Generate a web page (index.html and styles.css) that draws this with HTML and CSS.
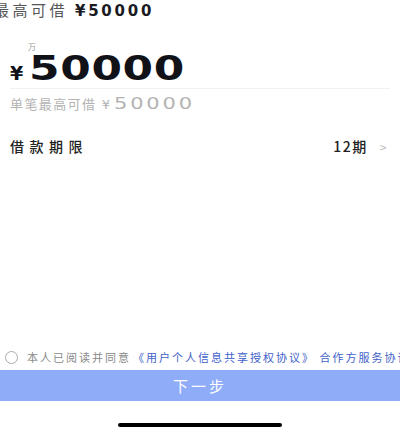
FILE: index.html
```html
<!DOCTYPE html>
<html lang="zh">
<head>
<meta charset="utf-8">
<link rel="stylesheet" href="styles.css">
</head>
<body>
<div class="page">
  <div class="head"><span class="head-label">最高可借</span> <span class="head-num">¥50000</span></div>
  <div class="amount">
    <div class="unit">万</div>
    <div class="amount-row"><span class="yen">¥</span><span class="big">50000</span></div>
  </div>
  <div class="divider"></div>
  <div class="limit">单笔最高可借 <span class="limit-yen">¥</span><span class="limit-num">50000</span></div>
  <div class="term">
    <span class="term-label">借款期限</span>
    <span class="term-value">12期<span class="arrow">&gt;</span></span>
  </div>
  <div class="spacer"></div>
  <div class="agree">
    <span class="radio"></span>
    <span class="agree-text">本人已阅读并同意</span>
    <span class="agree-link">《用户个人信息共享授权协议》 合作方服务协议</span>
  </div>
  <div class="btn">下一步</div>
  <div class="home"><span class="home-bar"></span></div>
</div>
</body>
</html>
```

FILE: styles.css
```css
html, body {
  margin: 0;
  padding: 0;
  background: #ffffff;
}
body {
  font-family: "Noto Sans CJK SC", "DejaVu Sans", sans-serif;
  color: #222;
  overflow: hidden;
}
.page {
  width: 400px;
  height: 432px;
  display: flex;
  flex-direction: column;
  overflow: hidden;
}
.head {
  margin-left: -6px;
  height: 20px;
  line-height: 20px;
  font-size: 15px;
  letter-spacing: 3.5px;
  white-space: nowrap;
}
.head-label {
  color: #555;
}
.head-num {
  font-family: "DejaVu Sans", sans-serif;
  font-weight: bold;
  color: #1a1a22;
  font-size: 15px;
  letter-spacing: 2.8px;
}
.amount {
  padding: 22px 10px 0 10px;
}
.unit {
  margin-left: 18px;
  font-size: 8px;
  line-height: 10px;
  color: #999;
}
.amount-row {
  display: flex;
  align-items: baseline;
  height: 34px;
}
.yen {
  font-family: "DejaVu Sans", sans-serif;
  font-weight: bold;
  font-size: 19px;
  color: #111118;
  margin-right: 6px;
}
.big {
  display: inline-block;
  font-family: "DejaVu Sans", sans-serif;
  font-weight: bold;
  font-size: 33px;
  line-height: 34px;
  letter-spacing: 0.5px;
  color: #111118;
  transform: scaleX(1.33);
  transform-origin: left center;
}
.divider {
  margin: 2px 10px 0 10px;
  height: 1px;
  background: #f1f1f1;
}
.limit {
  margin-top: 6px;
  padding: 0 10px;
  font-size: 13px;
  line-height: 18px;
  letter-spacing: 1.4px;
  color: #b3b3b3;
  white-space: nowrap;
}
.limit-yen {
  font-family: "DejaVu Sans", sans-serif;
  font-size: 13px;
  margin-left: 1px;
  margin-right: 3px;
}
.limit-num {
  display: inline-block;
  font-family: "DejaVu Sans", sans-serif;
  font-size: 15px;
  letter-spacing: 2px;
  transform: scaleX(1.4);
  transform-origin: left center;
}
.term {
  margin-top: 22px;
  padding: 0 12px 0 10px;
  display: flex;
  justify-content: space-between;
  align-items: center;
  height: 20px;
  font-size: 14px;
  line-height: 20px;
}
.term-label {
  letter-spacing: 5.5px;
  color: #222;
  font-weight: 500;
}
.term-value {
  font-weight: 500;
  color: #222;
  letter-spacing: 1.5px;
}
.arrow {
  margin-left: 12px;
  color: #bbb;
  font-size: 12px;
  font-weight: normal;
}
.spacer {
  flex: 1;
}
.agree {
  display: flex;
  align-items: center;
  height: 18px;
  padding-left: 5px;
  white-space: nowrap;
  font-size: 11px;
  letter-spacing: 2px;
}
.radio {
  flex: none;
  width: 11px;
  height: 11px;
  border: 1px solid #aaa;
  border-radius: 50%;
  margin-right: 9px;
}
.agree-text {
  color: #8a8a8a;
}
.agree-link {
  color: #3f62c9;
  margin-left: 2px;
}
.btn {
  margin-top: 4px;
  height: 31px;
  line-height: 31px;
  background: #8eacf8;
  color: #fff;
  text-align: center;
  font-size: 15px;
  letter-spacing: 3px;
}
.home {
  height: 31px;
  display: flex;
  justify-content: center;
  align-items: flex-end;
  padding-bottom: 5px;
  box-sizing: border-box;
}
.home-bar {
  width: 164px;
  height: 4px;
  border-radius: 2px;
  background: #000;
}
```
